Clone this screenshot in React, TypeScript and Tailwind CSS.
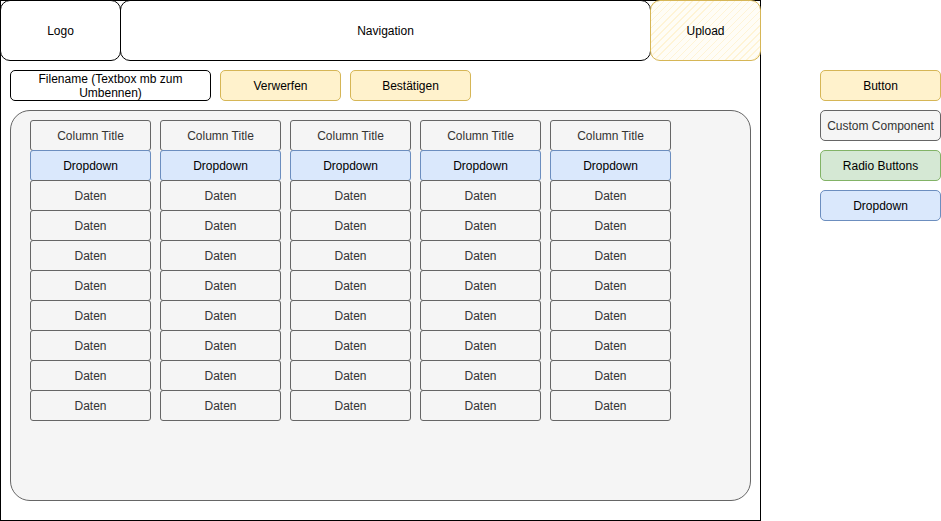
const columns = [0, 1, 2, 3, 4];
const dataRows = [0, 1, 2, 3, 4, 5, 6, 7];

const cell =
  "flex items-center justify-center w-[121px] h-[31px] border rounded-[3px] text-[12px]";

function Column() {
  return (
    <div className="flex flex-col">
      <div className={`${cell} border-[#666666] bg-[#f5f5f5] text-[#333333]`}>
        Column Title
      </div>
      <div className={`${cell} -mt-px border-[#6c8ebf] bg-[#dae8fc] text-black`}>
        Dropdown
      </div>
      {dataRows.map((row) => (
        <div
          key={row}
          className={`${cell} -mt-px border-[#666666] bg-[#f5f5f5] text-[#333333]`}
        >
          Daten
        </div>
      ))}
    </div>
  );
}

export default function App() {
  return (
    <div className="flex w-[941px] h-[521px] bg-white font-['Liberation_Sans',Arial,sans-serif] text-[12px] text-black">
      {/* Wireframe frame */}
      <div className="flex flex-col w-[761px] h-[521px] shadow-[inset_0_0_0_1px_#000]">
        {/* Header */}
        <div className="flex h-[61px]">
          <div className="flex items-center justify-center w-[121px] border border-black rounded-[10px] bg-white">
            Logo
          </div>
          <div className="flex flex-1 items-center justify-center -ml-px border border-black rounded-[10px] bg-white">
            Navigation
          </div>
          <div className="flex items-center justify-center w-[111px] -ml-px border border-[#d6b656] rounded-[10px] bg-[repeating-linear-gradient(-45deg,#fffdf6_0px,#fffdf6_4px,#fff4d6_4px,#fff4d6_5px)]">
            Upload
          </div>
        </div>

        {/* Filename + actions */}
        <div className="flex gap-[9px] mt-[9px] ml-[10px]">
          <div className="flex items-center justify-center w-[201px] h-[31px] border border-black rounded-[5px] bg-white text-center leading-[14px]">
            Filename (Textbox mb zum
            <br />
            Umbennen)
          </div>
          <div className="flex items-center justify-center w-[121px] h-[31px] border border-[#d6b656] rounded-[5px] bg-[#fff2cc]">
            Verwerfen
          </div>
          <div className="flex items-center justify-center w-[121px] h-[31px] border border-[#d6b656] rounded-[5px] bg-[#fff2cc]">
            Bestätigen
          </div>
        </div>

        {/* Table panel */}
        <div className="flex gap-[9px] mt-[9px] ml-[10px] w-[741px] h-[391px] pt-[9px] pl-[19px] border border-[#666666] rounded-[20px] bg-[#f5f5f5]">
          {columns.map((col) => (
            <Column key={col} />
          ))}
        </div>
      </div>

      {/* Legend */}
      <div className="flex flex-col gap-[9px] ml-[59px] mt-[70px]">
        <div className="flex items-center justify-center w-[121px] h-[31px] border border-[#d6b656] rounded-[5px] bg-[#fff2cc]">
          Button
        </div>
        <div className="flex items-center justify-center w-[121px] h-[31px] border border-[#666666] rounded-[5px] bg-[#f5f5f5] text-[#333333]">
          Custom Component
        </div>
        <div className="flex items-center justify-center w-[121px] h-[31px] border border-[#82b366] rounded-[5px] bg-[#d5e8d4]">
          Radio Buttons
        </div>
        <div className="flex items-center justify-center w-[121px] h-[31px] border border-[#6c8ebf] rounded-[5px] bg-[#dae8fc]">
          Dropdown
        </div>
      </div>
    </div>
  );
}
